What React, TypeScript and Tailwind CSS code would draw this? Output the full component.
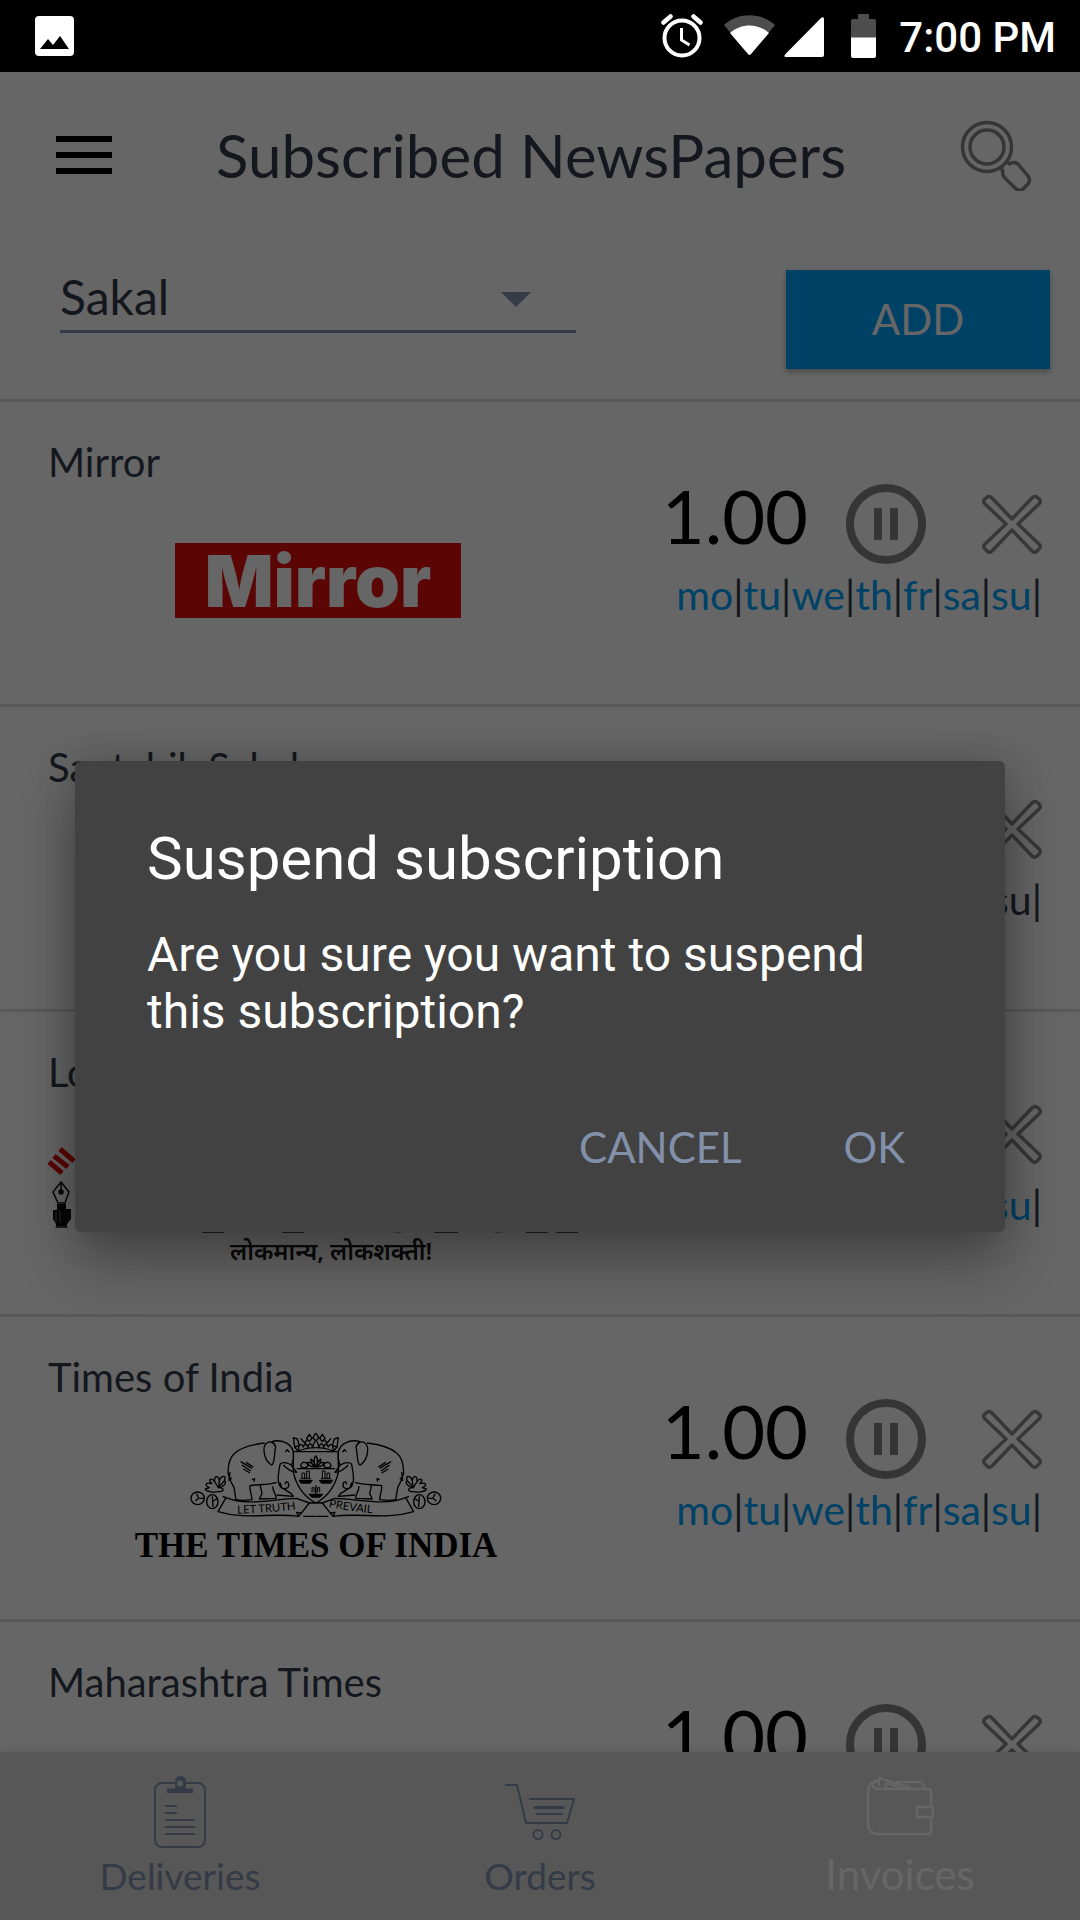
import React from "react";

const LATO = "font-[Lato,sans-serif]";

type Paper = {
  name: string;
  logo: React.ReactNode;
  activeDays: boolean;
};

const DAYS = ["mo", "tu", "we", "th", "fr", "sa", "su"];

function StatusBar() {
  return (
    <div className="relative z-20 flex h-[72px] shrink-0 items-center bg-black pl-[35px] pr-6 text-white">
      <svg width="39" height="40" viewBox="0 0 39 40" aria-hidden="true">
        <rect width="39" height="40" rx="4" fill="#fff" />
        <path d="M5 33 L13 23 L18 29 L25 20 L34 33 Z" fill="#000" />
      </svg>
      <svg className="ml-auto" width="42" height="44" viewBox="0 0 42 44" fill="none" stroke="#fff" aria-hidden="true">
        <circle cx="21" cy="24" r="17.5" strokeWidth="4" />
        <path d="M20.5 14v12l8 5" strokeWidth="3" />
        <path d="M2.5 8.500l7-6M39.500 8.500l-7-6" strokeWidth="4.500" strokeLinecap="round" />
      </svg>
      <svg className="ml-5" width="53" height="44" viewBox="0 0 53 44" aria-hidden="true">
        <path d="M1 11 C15 -2 38 -2 52 11 L28 40 Q26.500 42 25 40 Z" fill="#4d4d4d" />
        <path d="M7 19 C18 9 35 9 46 19 L28 40 Q26.500 42 25 40 Z" fill="#fff" />
      </svg>
      <svg className="ml-2" width="41" height="44" viewBox="0 0 41 44" aria-hidden="true">
        <path d="M1.500 40 L37 4 Q40 2 40 5 V41 Q40 43 38 43 H2 Q-1 43 1.500 40 Z" fill="#fff" />
      </svg>
      <svg className="ml-[26px]" width="26" height="44" viewBox="0 0 26 44" aria-hidden="true">
        <path d="M7 0h11v5h5q2 0 2 2v17H0V7q0-2 2-2h5z" fill="#4d4d4d" />
        <path d="M0 23.500h25V42q0 2-2 2H2q-2 0-2-2z" fill="#fff" />
      </svg>
      <span className="ml-[22px] pt-1 font-[Roboto,sans-serif] text-[42px] font-medium leading-[48px]">7:00 PM</span>
    </div>
  );
}

function Header() {
  return (
    <header className="flex h-[166px] shrink-0 items-center px-12 pl-14">
      <button type="button" aria-label="Open menu" className="flex w-14 flex-col gap-[10px]">
        <span className="h-[6px] bg-black" />
        <span className="h-[6px] bg-black" />
        <span className="h-[6px] bg-black" />
      </button>
      <h1 className="ml-[104px] whitespace-nowrap text-[60px] leading-[72px] text-[#343e4b]">Subscribed NewsPapers</h1>
      <button type="button" aria-label="Search" className="ml-auto">
        <svg width="72" height="72" viewBox="-1 -2 72 72" fill="none" stroke="#858585" strokeWidth="3.500" strokeLinejoin="round">
          <circle cx="26" cy="26" r="24.500" />
          <circle cx="26" cy="26" r="17" />
          <path d="M45 40 L48.500 43 Q53 40 57 43 L67 55 Q70 60 67 63 L62 68 Q58 71 54 67 L43 56 Q41 53 42 50 L39 46" />
        </svg>
      </button>
    </header>
  );
}

function MirrorLogo() {
  return (
    <div className="mb-[2px] flex h-[75px] w-[286px] items-center justify-center bg-[#e30d0a] font-[Inter,sans-serif] text-[72px] font-black leading-[75px] text-white">
      Mirror
    </div>
  );
}

function CrestHalf() {
  return (
    <g>
      <path d="M404 128 C370 132 335 140 315 158 C298 172 294 195 294 218 L302 242 L312 262 L318 298 L338 300 L366 298 C366 285 358 270 360 256 C385 252 415 254 440 246" />
      <path d="M390 252 L396 280 L388 296 L438 294 C440 284 428 274 428 258 M300 215 L297 240 L306 232" />
      <path d="M410 128 C395 140 402 182 425 194 C435 190 432 160 437 140 C432 124 420 122 410 128 Z" />
      <path d="M425 124 C455 115 485 130 490 155 C492 170 490 185 484 194 L500 216 C485 216 472 206 460 194 M484 194 C470 186 458 184 450 192 C445 220 440 245 452 260 C462 270 478 264 476 252 C474 240 464 244 466 252 M450 246 L455 262 L484 280 L490 288 L440 284" />
      <path d="M466 154 l6 -6 l6 8 M332 184 l34 20 M336 194 l26 18 M340 206 l20 12 M348 186 l22 14 M366 238 l8 -3 l-2 9" />
      <path d="M238 262 C222 256 226 244 246 250 C232 238 244 230 254 244 C252 226 266 222 268 242 C272 226 290 222 284 240 C292 250 276 262 264 262 C284 262 284 274 266 274 C250 278 224 272 226 266 Z M254 244 l10 16 M268 242 l-2 18 M284 240 l-18 20" />
      <ellipse cx="203" cy="294" rx="20" ry="19" />
      <ellipse cx="247" cy="304" rx="17" ry="21" />
      <path d="M200 280 l6 14 l16 0 M206 294 l-10 8 M247 288 l2 32 M249 302 l14 -8" />
      <path d="M288 292 C350 318 430 296 500 294 L538 308 L506 348 C420 336 350 360 264 334 Z" />
      <path d="M288 292 L278 288 M506 348 L500 336 L514 338" />
      <path d="M557 98 l-8 14 l8 10 M538 102 l-8 12 l8 10 l8 -10 z M512 114 l12 14 M524 128 l8 -10 M490 112 l12 4 l6 20 l-14 4 z M506 152 V140 Q512 124 520 140 Q526 122 534 140 Q540 120 548 140 Q552 124 557 122 M506 152 Q530 142 557 142 M494 140 l10 12" />
      <path d="M557 154 H490 V216 C500 260 525 290 557 308" />
      <path d="M500 205 H557 M512 194 q6 -14 20 -4 q4 10 -6 12 q-14 2 -14 -8 M557 166 q-9 14 0 34 M557 200 q-16 -8 -14 -24 q10 8 14 24 q-24 0 -24 -14 q14 0 24 14" />
      <path d="M508 240 h38 l-6 8 h-26 Z" fill="#000" />
      <path d="M516 234 v-16 h8 v16 M530 234 v-22 h8 v22 M512 234 h30" strokeWidth="3" />
      <path d="M538 282 h20 v8 h-12 Z" fill="#000" />
      <path d="M557 256 v24 M546 276 v-14 h6 v14" strokeWidth="3" />
      <path d="M538 308 H557 M520 348 H557" />
    </g>
  );
}

function TimesOfIndiaLogo() {
  return (
    <div className="flex flex-col items-center gap-2 pr-1 pt-1 text-black">
      <svg width="252" height="88" viewBox="180 92 756 264" fill="none" stroke="#000" strokeWidth="4" strokeLinejoin="round" aria-hidden="true">
        <CrestHalf />
        <g transform="translate(1115 0) scale(-1 1)">
          <CrestHalf />
        </g>
        <path id="motto-left" d="M322 340 Q430 338 535 322" stroke="none" />
        <path id="motto-right" d="M596 320 Q680 338 780 342" stroke="none" />
        <g fill="#000" stroke="none" fontFamily="Lato, sans-serif" fontSize="34">
          <text>
            <textPath href="#motto-left">LET TRUTH</textPath>
          </text>
          <text>
            <textPath href="#motto-right">PREVAIL</textPath>
          </text>
        </g>
      </svg>
      <div className="whitespace-nowrap font-['Liberation_Serif',serif] text-[35px] font-bold leading-[38px]">THE TIMES OF INDIA</div>
    </div>
  );
}

function LoksattaLogo() {
  return (
    <div className="mb-[18px] flex w-full flex-col self-end">
      <svg className="w-full" height="87" viewBox="0 0 540 87" preserveAspectRatio="xMinYMin meet" aria-hidden="true">
        <g stroke="#e30d0a" strokeWidth="5">
          <path d="M1 15 L14 26 M6 9 L20 20 M12 2 L26 14" />
        </g>
        <g fill="none" stroke="#111" strokeWidth="1.500">
          <path d="M13 35 L5 45 L10 56 H17 L21 45 Z M13 35 V43" />
          <circle cx="13" cy="45" r="2" fill="#000" />
        </g>
        <path d="M9 57h9v5h5v10l-4 5v4H8v-4l-3-5V63h4z" fill="#111" />
        <path d="M8 65v10M12 64v11M7 80h13" stroke="#777" strokeWidth="1" />
        <g fill="#555">
          <path d="M154 83h22v3h-22zM234 83h22v3h-22zM336 82q14 7 28 0zM386 83h24v3h-24zM436 82q14 7 28 0zM478 83h22v3h-22zM508 83h22v3h-22z" />
        </g>
      </svg>
      <div className="pl-[182px] font-['Noto_Sans','Noto_Sans_Devanagari',sans-serif] text-[24px] font-semibold leading-[34px] text-[#1a1a1a]">
        लोकमान्य, लोकशक्ती!
      </div>
    </div>
  );
}

function PaperRow({ paper }: { paper: Paper }) {
  return (
    <li className="flex h-[305px] shrink-0 border-t-[3px] border-[#dedede] pl-12 pr-[38px]">
      <div className="flex w-[540px] flex-col pt-9">
        <h2 className="text-[40px] leading-[48px] text-[#343e4b]">{paper.name}</h2>
        <div className="flex h-[190px] items-center justify-center">{paper.logo}</div>
      </div>
      <div className="flex flex-1 flex-col items-end gap-[7px] pt-[82px]">
        <div className="flex items-start">
          <span className="mt-1 text-[74px] leading-[56px] text-black">1.00</span>
          <button type="button" aria-label={`Pause ${paper.name}`} className="ml-[38px]">
            <svg width="80" height="80" viewBox="0 0 80 80" fill="#858585">
              <circle cx="40" cy="40" r="36" fill="none" stroke="#858585" strokeWidth="8" />
              <path d="M28 24h8v32h-8zM44 24h8v32h-8z" />
            </svg>
          </button>
          <button type="button" aria-label={`Remove ${paper.name}`} className="ml-14 mt-[10px]">
            <svg width="60" height="60" viewBox="0 0 60 60" fill="none" stroke="#8a8a8a" strokeWidth="3.500" strokeLinejoin="round">
              <path d="M30 25 L50 4 Q53 1 56 4 Q60 7 57 10 L36 30 L57 50 Q60 53 56 56 Q53 60 50 57 L30 36 L10 57 Q7 60 4 56 Q0 53 3 50 L24 30 L3 10 Q0 7 4 4 Q7 1 10 4 Z" />
            </svg>
          </button>
        </div>
        <div className="whitespace-nowrap text-[41px] leading-[48px] text-[#343e4b]">
          {DAYS.map((day) => (
            <React.Fragment key={day}>
              <span className={paper.activeDays ? "text-[#00a3ff]" : "text-[#343e4b]"}>{day}</span>|
            </React.Fragment>
          ))}
        </div>
      </div>
    </li>
  );
}

const PAPERS: Paper[] = [
  { name: "Mirror", logo: <MirrorLogo />, activeDays: true },
  { name: "Saptahik Sakal", logo: null, activeDays: false },
  { name: "Loksatta", logo: <LoksattaLogo />, activeDays: true },
  { name: "Times of India", logo: <TimesOfIndiaLogo />, activeDays: true },
  { name: "Maharashtra Times", logo: null, activeDays: true },
];

function AddBar() {
  return (
    <div className="flex h-[161px] shrink-0 items-start justify-between pl-[60px] pr-[30px] pt-7">
      <div className="relative w-[516px]">
        <select
          aria-label="Newspaper"
          defaultValue="Sakal"
          className="h-[67px] w-full appearance-none border-b-[3px] border-[#8593af] bg-transparent pb-[2px] text-[48px] leading-[60px] text-[#343e4b]"
        >
          <option>Sakal</option>
          <option>Mirror</option>
        </select>
        <svg className="pointer-events-none absolute right-[45px] top-[26px]" width="30" height="15" viewBox="0 0 30 15" aria-hidden="true">
          <path d="M0 0h30L15 15z" fill="#8593af" />
        </svg>
      </div>
      <button
        type="button"
        className="mt-1 h-[99px] w-[264px] bg-[#00a3ff] pb-[2px] text-[42px] leading-[50px] text-white shadow-[0_3px_6px_rgba(0,0,0,0.3)]"
      >
        ADD
      </button>
    </div>
  );
}

function BottomNav() {
  return (
    <nav className="relative grid h-[168px] shrink-0 grid-cols-3 bg-[#dadada] pt-6 text-[#8593af] shadow-[0_-3px_8px_rgba(0,0,0,0.08)]">
      <a href="#deliveries" className="flex flex-col items-center gap-1">
        <svg width="52" height="72" viewBox="0 0 52 72" fill="none" stroke="currentColor" aria-hidden="true">
          <rect x="1" y="7" width="50" height="64" rx="7" strokeWidth="2" />
          <path d="M13 12.500h26v4.500H13z M21 13V6q0-6 5.500-6T32 6v7z" fill="currentColor" stroke="none" />
          <circle cx="26" cy="7.500" r="3" fill="#dadada" stroke="none" />
          <path d="M11 30h12M11 37h12M11 44h30M11 51h30M11 58h30" strokeWidth="2" />
        </svg>
        <span className="text-[37px] leading-[48px]">Deliveries</span>
      </a>
      <a href="#orders" className="flex flex-col items-center gap-1">
        <svg width="70" height="72" viewBox="0 0 70 72" fill="none" stroke="currentColor" strokeWidth="2" strokeLinejoin="round" strokeLinecap="round" aria-hidden="true">
          <path d="M1 9h11l9 38h41l7-24H25" />
          <path d="M30 31.500h28" strokeWidth="3" />
          <path d="M32 38h25" />
          <circle cx="33" cy="58.500" r="4.500" />
          <circle cx="51" cy="58.500" r="4.500" />
        </svg>
        <span className="text-[37px] leading-[48px]">Orders</span>
      </a>
      <a href="#invoices" aria-current="page" className="flex flex-col items-center gap-1 text-white">
        <svg width="68" height="72" viewBox="0 0 68 72" fill="none" stroke="currentColor" strokeWidth="2.500" strokeLinejoin="round" aria-hidden="true">
          <path d="M10 5q-8 2-8 11v33q1 9 10 9h51q2 0 2-3V42M65 30V16q0-3-3-3H14q-8 0-7-5 2-4 7-3" />
          <path d="M13 10V2l32 10M20 13V7l16 5M30 6h24q2 0 3 3l2 4" strokeWidth="2" />
          <rect x="51" y="31" width="16" height="10" rx="1" />
        </svg>
        <span className="text-[42px] leading-[44px]">Invoices</span>
      </a>
    </nav>
  );
}

function SuspendDialog() {
  return (
    <div className="absolute inset-x-0 bottom-0 top-[72px] z-10 flex items-center justify-center bg-black/60 px-[75px]">
      <div
        role="alertdialog"
        aria-labelledby="dialog-title"
        aria-describedby="dialog-text"
        className="w-full rounded-md bg-[#424242] px-[72px] pb-[45px] pt-[63px] font-[Roboto,sans-serif] text-white shadow-[0_32px_60px_rgba(0,0,0,0.3),0_0_40px_rgba(0,0,0,0.18)]"
      >
        <h2 id="dialog-title" className="text-[60px] leading-[70px]">Suspend subscription</h2>
        <p id="dialog-text" className="mt-8 text-[48px] leading-[57px]">
          Are you sure you want to suspend this subscription?
        </p>
        <div className={`mt-[67px] flex justify-end gap-[102px] pr-[28px] ${LATO} text-[42px] leading-[80px] text-[#8290aa]`}>
          <button type="button">CANCEL</button>
          <button type="button">OK</button>
        </div>
      </div>
    </div>
  );
}

export default function App() {
  return (
    <div className={`relative flex h-screen flex-col overflow-hidden bg-white ${LATO}`}>
      <StatusBar />
      <Header />
      <AddBar />
      <ul className="flex min-h-0 flex-1 flex-col overflow-hidden">
        {PAPERS.map((paper) => (
          <PaperRow key={paper.name} paper={paper} />
        ))}
      </ul>
      <BottomNav />
      <SuspendDialog />
    </div>
  );
}
